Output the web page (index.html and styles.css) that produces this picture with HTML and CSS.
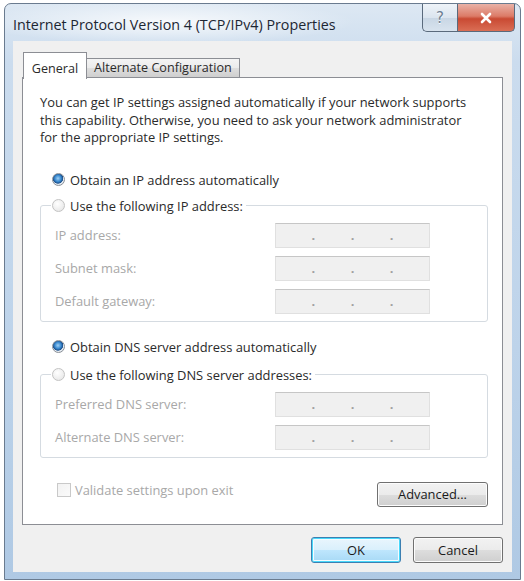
FILE: index.html
```html
<!DOCTYPE html>
<html lang="en">
<head>
    <meta charset="UTF-8">
    <meta name="viewport" content="width=device-width, initial-scale=1.0">
    <title>Internet Protocol Version 4 (TCP/IPv4) Properties</title>
    <link rel="stylesheet" href="styles.css">
</head>
<body>
    <div class="window">
        <div class="titlebar">
            <span class="title">Internet Protocol Version 4 (TCP/IPv4) Properties</span>
            <div class="caption-buttons">
                <button class="cap help">?</button>
                <button class="cap close">
                    <svg width="16" height="14" viewBox="0 0 16 14">
                        <path d="M4 3 L12 11 M12 3 L4 11" stroke="#ffffff" stroke-width="2.6" stroke-linecap="round"/>
                    </svg>
                </button>
            </div>
        </div>

        <div class="client">
            <div class="tabs">
                <div class="tab active">General</div>
                <div class="tab">Alternate Configuration</div>
            </div>

            <div class="panel">
                <p class="intro">You can get IP settings assigned automatically if your network supports<br>this capability. Otherwise, you need to ask your network administrator<br>for the appropriate IP settings.</p>

                <label class="radio-row first"><input type="radio" name="ip" checked>Obtain an IP address automatically</label>
                <fieldset class="group">
                    <legend><label class="radio-row"><input type="radio" name="ip">Use the following IP address:</label></legend>
                    <div class="field"><span>IP address:</span><div class="ip-box"><i>.</i><i>.</i><i>.</i></div></div>
                    <div class="field"><span>Subnet mask:</span><div class="ip-box"><i>.</i><i>.</i><i>.</i></div></div>
                    <div class="field"><span>Default gateway:</span><div class="ip-box"><i>.</i><i>.</i><i>.</i></div></div>
                </fieldset>

                <label class="radio-row dns"><input type="radio" name="dns" checked>Obtain DNS server address automatically</label>
                <fieldset class="group second">
                    <legend><label class="radio-row"><input type="radio" name="dns">Use the following DNS server addresses:</label></legend>
                    <div class="field"><span>Preferred DNS server:</span><div class="ip-box"><i>.</i><i>.</i><i>.</i></div></div>
                    <div class="field"><span>Alternate DNS server:</span><div class="ip-box"><i>.</i><i>.</i><i>.</i></div></div>
                </fieldset>

                <div class="bottom-row">
                    <label class="check"><input type="checkbox" disabled>Validate settings upon exit</label>
                    <button class="btn advanced">Advanced...</button>
                </div>
            </div>

            <div class="footer">
                <button class="btn default">OK</button>
                <button class="btn">Cancel</button>
            </div>
        </div>
    </div>
</body>
</html>
```

FILE: styles.css
```css
body {
    margin: 0;
    background: #ffffff;
    font-family: "Open Sans", "Noto Sans", sans-serif;
    font-size: 12.9px;
    color: #2a2a2a;
}
.window {
    box-sizing: border-box;
    width: 517px;
    height: 577px;
    margin: 3px 0 0 4px;
    border: 1px solid #6a7b8f;
    border-radius: 7px 7px 0 0;
    background: linear-gradient(180deg, #dde8f3 0%, #cbdcee 10%, #bdd3ea 60%, #afc9e4 100%);
    display: flex;
    flex-direction: column;
}
.titlebar {
    height: 37px;
    display: flex;
    align-items: flex-start;
    background: radial-gradient(ellipse 190px 22px at 160px 18px, rgba(255, 255, 255, 0.8), rgba(255, 255, 255, 0));
}
.title {
    margin: 11px 0 0 8px;
    font-size: 14.3px;
    line-height: 20px;
    color: #1c2633;
}
.caption-buttons {
    margin-left: auto;
    margin-right: 5px;
    display: flex;
}
.cap {
    height: 28px;
    border: 1px solid #5a6a7c;
    border-top: none;
    padding: 0;
    display: flex;
    align-items: center;
    justify-content: center;
}
.help {
    width: 35px;
    border-radius: 0 0 0 5px;
    border-right: none;
    background: linear-gradient(180deg, #eef3f8 0%, #dbe5ef 50%, #c8d6e4 51%, #d8e3ee 100%);
    color: #6c7e92;
    font-family: "DejaVu Sans", sans-serif;
    font-size: 15px;
    text-shadow: 0 1px 0 #ffffff;
}
.close {
    width: 58px;
    border-radius: 0 0 5px 0;
    background: linear-gradient(180deg, #e9b2a7 0%, #dc7b67 45%, #c94a33 55%, #da6e55 100%);
}
.client {
    flex: 1;
    margin: 0 8px 7px 8px;
    padding: 11px 9px 0 9px;
    background: #f0f0f0;
}
.tabs {
    height: 26px;
    display: flex;
    align-items: flex-end;
}
.tab {
    box-sizing: border-box;
    height: 20px;
    padding: 0 7px;
    border: 1px solid #8c8e94;
    border-left: none;
    background: linear-gradient(180deg, #f4f4f4 0%, #ebebeb 50%, #dddddd 51%, #cfcfcf 100%);
    line-height: 18px;
    font-size: 12.6px;
}
.tab.active {
    position: relative;
    z-index: 1;
    width: 64px;
    height: 27px;
    margin-left: 1px;
    margin-bottom: -1px;
    padding: 0;
    border-left: 1px solid #8c8e94;
    border-bottom: none;
    background: #ffffff;
    line-height: 31px;
    text-align: center;
}
.panel {
    box-sizing: border-box;
    height: 448px;
    margin-top: -1px;
    padding: 16px 14px 0 17px;
    border: 1px solid #8c8e94;
    background: #ffffff;
}
.intro {
    margin: 0;
    line-height: 17.6px;
}
.radio-row {
    display: flex;
    align-items: center;
    height: 18px;
}
.radio-row.first {
    margin-top: 24px;
    padding-left: 11px;
}
.radio-row.dns {
    margin-top: 16px;
    padding-left: 11px;
}
input[type="radio"] {
    appearance: none;
    box-sizing: border-box;
    width: 13px;
    height: 13px;
    margin: 0 5px 0 1px;
    border: 1px solid #c3c3c3;
    border-radius: 50%;
    background: radial-gradient(circle at 40% 35%, #ffffff, #e2e2e2);
}
input[type="radio"]:checked {
    border-color: #8a8f96;
    background: radial-gradient(circle at 45% 40%, #9fd0f5 0%, #3a8ad0 35%, #1c4f8a 55%, #e8eef4 62%, #ced6de 100%);
}
.group {
    margin: 8px 0 0 0;
    padding: 8px 14px 7px 14px;
    border: 1px solid #d5dbe1;
    border-radius: 3px;
}
.group.second {
    margin-top: 10px;
}
.group legend {
    margin-left: -4px;
    padding: 0 3px 0 0;
}
.field {
    display: flex;
    align-items: center;
    height: 25px;
    margin-bottom: 8px;
    color: #a8a8a8;
}
.field:last-child {
    margin-bottom: 0;
}
.field span {
    width: 220px;
}
.ip-box {
    box-sizing: border-box;
    width: 155px;
    height: 25px;
    border: 1px solid #e0e0e0;
    border-top-color: #c6c6c6;
    background: #f0f0f0;
    display: flex;
    justify-content: space-evenly;
    align-items: center;
}
.ip-box i {
    font-style: normal;
    font-weight: bold;
    color: #a0a0a0;
    line-height: 14px;
}
.bottom-row {
    margin-top: 24px;
    display: flex;
    justify-content: space-between;
    align-items: flex-start;
}
.check {
    display: flex;
    align-items: center;
    height: 16px;
    padding-left: 17px;
    color: #a8a8a8;
}
input[type="checkbox"] {
    appearance: none;
    box-sizing: border-box;
    width: 14px;
    height: 14px;
    margin: 0 4px 0 0;
    border: 1px solid #c9c9c9;
    background: linear-gradient(135deg, #f2f2f2, #fafafa);
}
.btn {
    box-sizing: border-box;
    height: 26px;
    padding: 0;
    border: 1px solid #707070;
    border-radius: 3px;
    background: linear-gradient(180deg, #f2f2f2 0%, #ebebeb 50%, #dddddd 51%, #cfcfcf 100%);
    font-family: inherit;
    font-size: 12.9px;
    color: #1a1a1a;
    box-shadow: inset 0 0 0 1px #fcfcfc;
}
.advanced {
    width: 111px;
    height: 25px;
}
.footer {
    margin-top: 12px;
    display: flex;
    justify-content: flex-end;
    gap: 12px;
}
.footer .btn {
    width: 90px;
}
.btn.default {
    border-color: #3c7fb1;
    background: linear-gradient(180deg, #eaf6fd 0%, #d9f0fc 50%, #bee6fd 51%, #a7d9f5 100%);
    box-shadow: inset 0 0 0 1px #48d8fb, inset 0 0 0 2px #f4fbff;
}
```
